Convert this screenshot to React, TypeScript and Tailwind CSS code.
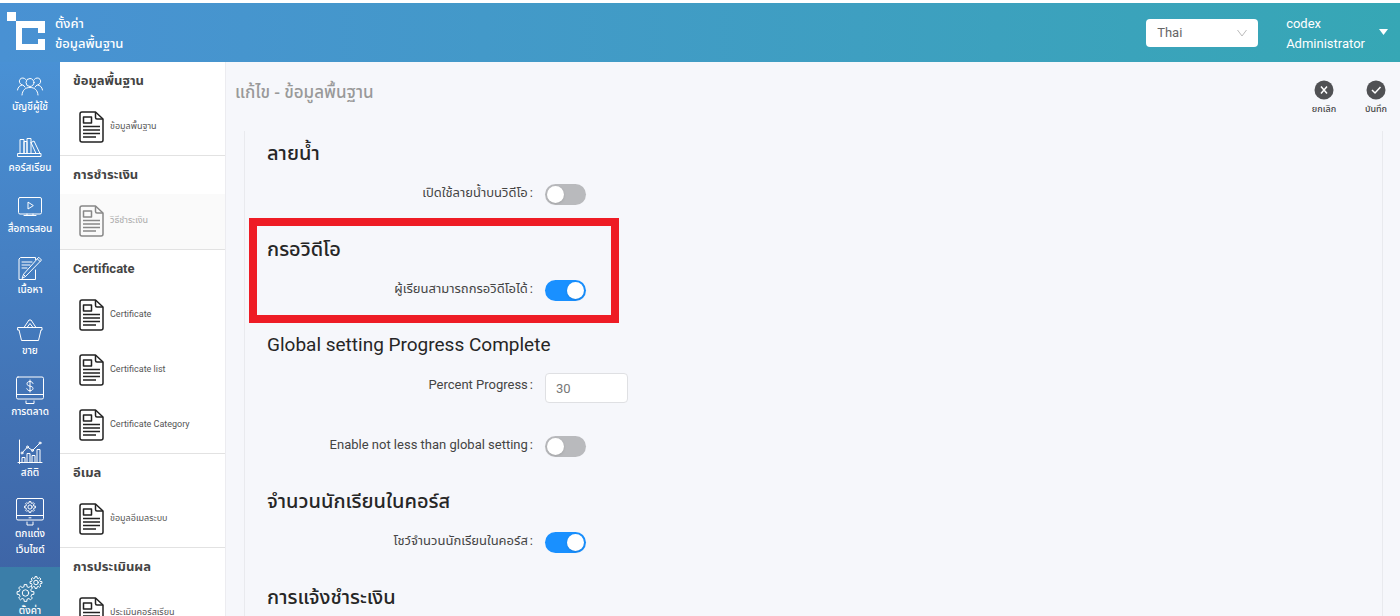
import { useId, useState, type ReactNode } from "react";
import clsx from "clsx";

type NavItem = {
  label: string;
  icon: ReactNode;
  active?: boolean;
};

type MenuGroup = {
  title: string;
  items: { label: string; disabled?: boolean }[];
};

const GEAR_TEETH = [0, 45, 90, 135, 180, 225, 270, 315];

function Gear({ cx, cy, r }: { cx: number; cy: number; r: number }) {
  return (
    <g transform={`translate(${cx} ${cy})`}>
      <circle r={r * 0.38} />
      <path
        d={GEAR_TEETH.map((deg, i) => {
          const at = (radius: number, d: number) => {
            const a = ((deg + d) * Math.PI) / 180;
            return `${(radius * Math.cos(a)).toFixed(2)} ${(radius * Math.sin(a)).toFixed(2)}`;
          };
          return `${i === 0 ? "M" : "L"}${at(r * 0.76, -13)}L${at(r, -9)}L${at(r, 9)}L${at(r * 0.76, 13)}`;
        }).join("") + "Z"}
      />
    </g>
  );
}

function NavIcon({ children }: { children: ReactNode }) {
  return (
    <svg
      viewBox="0 0 28 28"
      className="h-7 w-7"
      fill="none"
      stroke="currentColor"
      strokeWidth="1"
      strokeLinecap="round"
      strokeLinejoin="round"
      aria-hidden="true"
    >
      {children}
    </svg>
  );
}

const navItems: NavItem[] = [
  {
    label: "บัญชีผู้ใช้",
    icon: (
      <NavIcon>
        <circle cx="14" cy="11.5" r="4" />
        <path d="M6 24c.4-4.600 3-7.500 8-7.500s7.600 2.900 8 7.500" />
        <path d="M9.600 8.300a3.500 3.500 0 1 0-4 5.400M18.400 8.300a3.500 3.500 0 1 1 4 5.400" />
        <path d="M1.500 19c.5-3 2.300-4.800 5.500-5.100l2 2.200M26.500 19c-.5-3-2.300-4.800-5.500-5.100l-2 2.200" />
      </NavIcon>
    ),
  },
  {
    label: "คอร์สเรียน",
    icon: (
      <NavIcon>
        <path d="M2 21.500h23v3H2zM4 21.500v-14h4v14M8 21.500V9.500h3v12M11 21.500v-15h4v15M15 10.500l3-1.500 6 12.500M15 10.500l5 11" />
      </NavIcon>
    ),
  },
  {
    label: "สื่อการสอน",
    icon: (
      <NavIcon>
        <rect x="2.500" y="4.500" width="23" height="16.500" rx="1.500" />
        <path d="M12 9.500v6.500l5-3.200zM11 21v1.500h6V21M8 22.500h12" />
      </NavIcon>
    ),
  },
  {
    label: "เนื้อหา",
    icon: (
      <NavIcon>
        <path d="M19.500 5.500v-2h-15l-1.500 1.500v20.500h16.500V16M6 8h10M6 11h8M6 14h5" />
        <path d="M23 3.500l2.500 2.500L9.500 22.500 6 24.500 7.500 20.500zM21.500 5l2.500 2.500M7.500 20.500l2 2" />
      </NavIcon>
    ),
  },
  {
    label: "ขาย",
    icon: (
      <NavIcon>
        <path d="M2 12.500h24v2.500h-1l-2.500 10.500H5.500L3 15H2zM8 12.500l5-7.500h2l5 7.500M11 12.500l3-4 3 4" />
      </NavIcon>
    ),
  },
  {
    label: "การตลาด",
    icon: (
      <NavIcon>
        <rect x=".5" y="1" width="27" height="22" rx="1.500" />
        <path d="M.5 18.500h27M10 25v2.500h8V25M17 7.500c-.5-1.300-1.500-2-3-2-1.700 0-3 .8-3 2.300 0 3.200 6 1.500 6 4.600 0 1.400-1.300 2.300-3 2.300-1.600 0-2.700-.7-3.200-2M14 4v12" />
      </NavIcon>
    ),
  },
  {
    label: "สถิติ",
    icon: (
      <NavIcon>
        <path d="M3.500 3v23.500M2 25.500h24M6 25.500v-5h3v5M11 25.500v-9h3v9M16 25.500v-7h3v7M21 25.500v-13h3v13M6 16l5.500-6 5 3.500L24 6" />
        <circle cx="6" cy="16" r="1" />
        <circle cx="11.500" cy="10" r="1" />
        <circle cx="16.500" cy="13.500" r="1" />
        <circle cx="24" cy="6" r="1" />
      </NavIcon>
    ),
  },
  {
    label: "ตกแต่งเว็บไซต์",
    icon: (
      <NavIcon>
        <rect x=".5" y=".5" width="27" height="21.500" rx="1.500" />
        <path d="M.5 17.500h27M13 19.800h2M11 24v3h6v-3" />
        <Gear cx={14} cy={9} r={5.5} />
      </NavIcon>
    ),
  },
  {
    label: "ตั้งค่า",
    active: true,
    icon: (
      <NavIcon>
        <Gear cx={9.5} cy={18} r={8.5} />
        <Gear cx={20} cy={7.5} r={6} />
      </NavIcon>
    ),
  },
];

const menuGroups: MenuGroup[] = [
  { title: "ข้อมูลพื้นฐาน", items: [{ label: "ข้อมูลพื้นฐาน" }] },
  { title: "การชำระเงิน", items: [{ label: "วิธีชำระเงิน", disabled: true }] },
  {
    title: "Certificate",
    items: [
      { label: "Certificate" },
      { label: "Certificate list" },
      { label: "Certificate Category" },
    ],
  },
  { title: "อีเมล", items: [{ label: "ข้อมูลอีเมลระบบ" }] },
  { title: "การประเมินผล", items: [{ label: "ประเมินคอร์สเรียน" }] },
];

function DocumentIcon() {
  return (
    <svg
      viewBox="0 0 25 32"
      className="h-8 w-[25px] shrink-0"
      fill="none"
      stroke="currentColor"
      strokeWidth="1.500"
      strokeLinejoin="round"
      aria-hidden="true"
    >
      <path d="M3 1h13.500l7.500 7v21a2 2 0 0 1-2 2H3a2 2 0 0 1-2-2V3a2 2 0 0 1 2-2z" />
      <path d="M16.500 1v5.500a1.500 1.500 0 0 0 1.500 1.500h6M4.500 6h8v6h-8zM4 15.500h17M4 19h17M4 22.500h17M4 26h13" />
    </svg>
  );
}

function Header() {
  return (
    <header className="flex h-[59px] shrink-0 items-center bg-linear-to-r from-[#4991d3] to-[#36a7b5] text-[13px] text-white">
      <svg viewBox="0 0 38 38" className="mb-1 ml-[7px] h-[38px] w-[38px]" aria-label="codex">
        <path
          fill="currentColor"
          fillRule="evenodd"
          d="M0 0h9v9h29v12h-7v-5H15v16h16v-5h7v11H9V9H0z"
        />
      </svg>
      <div className="ml-2.5 pt-0.5 leading-5 font-medium">
        <p>ตั้งค่า</p>
        <p>ข้อมูลพื้นฐาน</p>
      </div>
      <div className="relative ml-auto w-[112px]">
        <select
          aria-label="Language"
          defaultValue="th"
          className="block h-7 w-full appearance-none rounded-sm bg-white pl-[11px] text-[#666]"
        >
          <option value="th">Thai</option>
          <option value="en">English</option>
        </select>
        <svg
          viewBox="0 0 10 8"
          className="pointer-events-none absolute top-2.5 right-[11px] h-2 w-2.5"
          fill="none"
          stroke="#bbb"
          aria-hidden="true"
        >
          <path d="M.5 1 5 7l4.500-6" />
        </svg>
      </div>
      <button type="button" className="mr-3 ml-7 flex items-center gap-3.5 pt-0.5 text-left leading-5">
        <span>
          codex
          <br />
          Administrator
        </span>
        <svg viewBox="0 0 9 6" className="mb-1 h-1.5 w-[9px]" aria-hidden="true">
          <path d="M0 0h9L4.500 6z" fill="currentColor" />
        </svg>
      </button>
    </header>
  );
}

function MainNav() {
  return (
    <nav className="w-[60px] shrink-0 overflow-hidden bg-linear-to-b from-[#4991d5] to-[#3d61a2] pt-px text-white">
      {navItems.map((item) => (
        <a
          key={item.label}
          href="#"
          className={clsx(
            "flex flex-col items-center pt-2 pb-[9px]",
            item.active && "bg-[#3b7ea9]",
          )}
        >
          {item.icon}
          <span className="w-[60px] px-1 text-center text-[10px] leading-4 font-medium">
            {item.label}
          </span>
        </a>
      ))}
    </nav>
  );
}

function SubMenu() {
  return (
    <aside className="w-[166px] shrink-0 overflow-hidden border-r border-[#ececf0] bg-white">
      {menuGroups.map((group) => (
        <section key={group.title} className="border-b border-[#e2e2e2]">
          <h2 className="pl-[13px] text-[13px] leading-[38px] font-bold text-[#444]">
            {group.title}
          </h2>
          {group.items.map((item) => (
            <a
              key={item.label}
              href="#"
              className={clsx(
                "flex h-[55px] items-center gap-1.5 pb-px pl-[19px] text-[9px] whitespace-nowrap",
                item.disabled ? "bg-[#fafafa] text-[#888]" : "text-[#222]",
              )}
            >
              <DocumentIcon />
              <span className={item.disabled ? "text-[#aaa]" : "text-[#555]"}>{item.label}</span>
            </a>
          ))}
        </section>
      ))}
    </aside>
  );
}

function ActionButton({ label, children }: { label: string; children: ReactNode }) {
  return (
    <button
      type="button"
      className="flex w-8 flex-col items-center gap-px text-[9px] leading-4 font-medium text-[#444]"
    >
      <svg
        viewBox="0 0 20 20"
        className="h-5 w-5"
        fill="none"
        stroke="white"
        strokeWidth="1.500"
        aria-hidden="true"
      >
        <circle cx="10" cy="10" r="9.500" fill="#505154" stroke="none" />
        {children}
      </svg>
      {label}
    </button>
  );
}

function Section({
  title,
  latin,
  highlighted,
  children,
}: {
  title: string;
  latin?: boolean;
  highlighted?: boolean;
  children?: ReactNode;
}) {
  return (
    <section className="relative">
      <h2
        className={clsx(
          "mb-[7px] leading-7 text-[#262626]",
          latin ? "text-[19px]" : "text-[20px] font-medium",
        )}
      >
        {title}
      </h2>
      {children}
      {highlighted ? (
        <div className="pointer-events-none absolute -top-[17px] -left-[18px] h-[105px] w-[370px] border-8 border-[#ee1c25]" />
      ) : null}
    </section>
  );
}

function Row({ id, label, children }: { id: string; label: string; children: ReactNode }) {
  return (
    <div className="flex items-start gap-3">
      <label htmlFor={id} className="w-[266px] text-right text-[13px] leading-[38px] text-[#444]">
        {label}
        <span className="ml-0.5">:</span>
      </label>
      {children}
    </div>
  );
}

function SwitchRow({ label, defaultOn = false }: { label: string; defaultOn?: boolean }) {
  const id = useId();
  const [on, setOn] = useState(defaultOn);

  return (
    <Row id={id} label={label}>
      <button
        id={id}
        type="button"
        role="switch"
        aria-checked={on}
        onClick={() => setOn(!on)}
        className={clsx(
          "mt-2.5 mb-[30px] flex h-[21px] w-[41px] items-center rounded-full px-0.5",
          on ? "justify-end bg-[#1990ff]" : "justify-start bg-[#b9babd]",
        )}
      >
        <span className="h-[17px] w-[17px] rounded-full bg-white shadow-sm" />
      </button>
    </Row>
  );
}

function NumberRow({ label, value }: { label: string; value: string }) {
  const id = useId();
  return (
    <Row id={id} label={label}>
      <input
        id={id}
        type="text"
        inputMode="numeric"
        defaultValue={value}
        className="mt-[7px] mb-[23px] h-[30px] w-[83px] rounded-sm border border-[#dfe0e3] bg-white px-2.5 text-[13px] text-[#777]"
      />
    </Row>
  );
}

export default function App() {
  return (
    <div className="flex h-screen flex-col overflow-hidden bg-[#f6f7fb] pt-[3px] font-['Roboto','Noto_Sans','Noto_Sans_Thai',sans-serif] before:absolute before:inset-x-0 before:top-0 before:h-[3px] before:bg-white">
      <Header />
      <div className="flex min-h-0 flex-1">
        <MainNav />
        <SubMenu />
        <main className="flex min-w-0 flex-1 flex-col">
          <div className="flex h-[69px] shrink-0 items-start justify-between pt-[18px] pr-2 pl-[9px]">
            <h1 className="text-[17px] leading-6 font-medium text-[#999]">
              แก้ไข - ข้อมูลพื้นฐาน
            </h1>
            <div className="flex gap-5">
              <ActionButton label="ยกเลิก">
                <path d="m7 6.500 6 7m0-7-6 7" />
              </ActionButton>
              <ActionButton label="บันทึก">
                <path d="m6 10 3 3 5.500-6" />
              </ActionButton>
            </div>
          </div>
          <form className="mr-[17px] ml-[18px] min-h-0 flex-1 overflow-hidden border-x border-[#e9eaee] px-[22px] pt-2">
            <Section title="ลายน้ำ">
              <SwitchRow label="เปิดใช้ลายน้ำบนวิดีโอ" />
            </Section>
            <Section title="กรอวิดีโอ" highlighted>
              <SwitchRow label="ผู้เรียนสามารถกรอวิดีโอได้" defaultOn />
            </Section>
            <Section title="Global setting Progress Complete" latin>
              <NumberRow label="Percent Progress" value="30" />
              <SwitchRow label="Enable not less than global setting" />
            </Section>
            <Section title="จำนวนนักเรียนในคอร์ส">
              <SwitchRow label="โชว์จำนวนนักเรียนในคอร์ส" defaultOn />
            </Section>
            <Section title="การแจ้งชำระเงิน" />
          </form>
        </main>
      </div>
    </div>
  );
}
